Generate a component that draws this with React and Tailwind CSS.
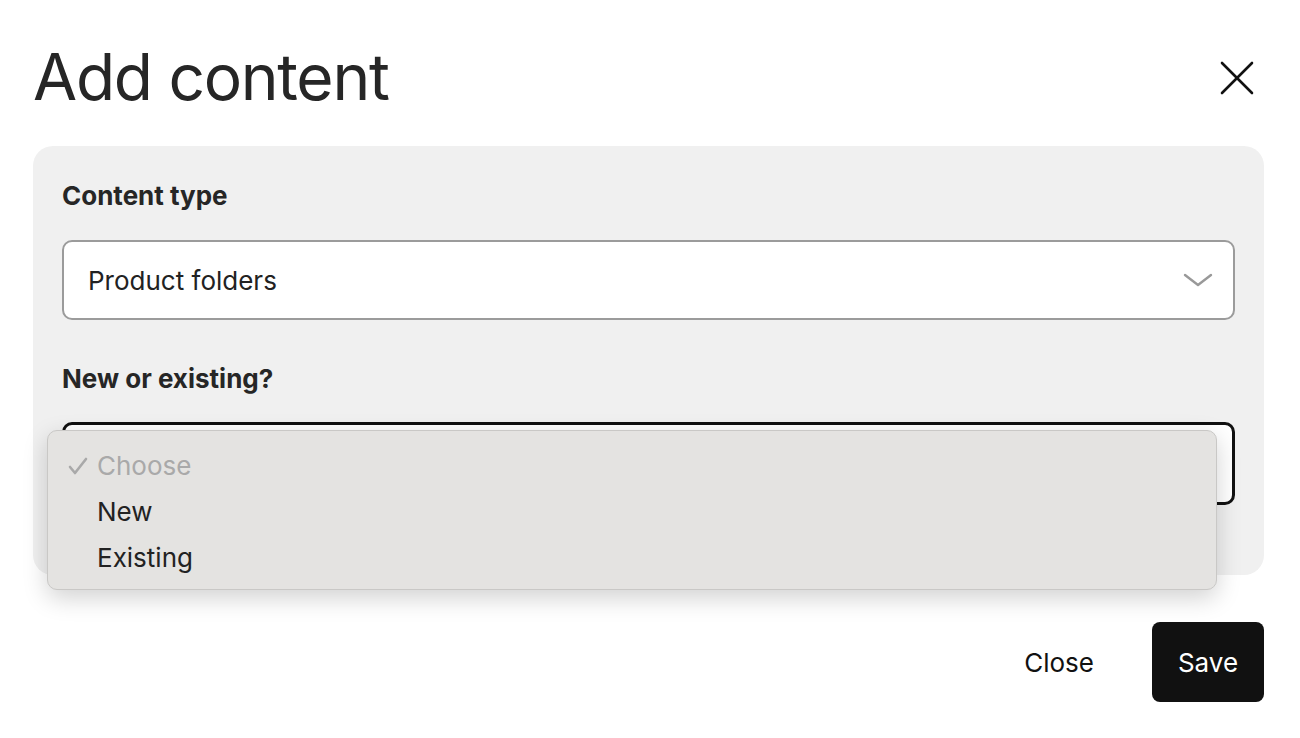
export default function App() {
  return (
    <div
      className="w-[1300px] h-[738px] bg-white pl-[33px] pr-[36px] pt-[36px] text-[#222]"
      style={{ fontFamily: "Inter, 'Liberation Sans', sans-serif" }}
    >
      {/* Header */}
      <div className="flex items-center justify-between h-[82px]">
        <h1 className="text-[64px] font-normal tracking-[-0.02em] leading-none text-[#262626]">
          Add content
        </h1>
        <button className="mr-[10px] mt-[2px] text-[#111]">
          <svg width="34" height="34" viewBox="0 0 34 34" fill="none" stroke="currentColor" strokeWidth="2.6" strokeLinecap="round">
            <line x1="2" y1="2" x2="32" y2="32" />
            <line x1="32" y1="2" x2="2" y2="32" />
          </svg>
        </button>
      </div>

      {/* Form panel */}
      <div className="mt-[28px] bg-[#f0f0f0] rounded-[20px] px-[29px] pt-[34px] pb-[70px]">
        <label className="block text-[26px] font-bold text-[#262626] leading-[32px]">
          Content type
        </label>
        <div className="mt-[28px] h-[80px] bg-white border-2 border-[#9b9b9b] rounded-[10px] flex items-center justify-between pl-[24px] pr-[20px]">
          <span className="text-[26px] text-[#222]">Product folders</span>
          <svg width="30" height="14" viewBox="0 0 30 14" fill="none" stroke="#999" strokeWidth="2.4" strokeLinecap="round" strokeLinejoin="round">
            <polyline points="2,2 15,12 28,2" />
          </svg>
        </div>

        <label className="block mt-[43px] text-[26px] font-bold text-[#262626] leading-[32px]">
          New or existing?
        </label>
        <div className="relative mt-[27px]">
          <div className="h-[83px] bg-white border-[3px] border-[#111] rounded-[10px]" />

          {/* Open dropdown */}
          <div className="absolute left-[-15px] top-[8px] w-[1170px] h-[160px] bg-[#e4e3e1] border border-[#c9c8c6] rounded-[10px] shadow-[0_8px_24px_rgba(0,0,0,0.18)] pt-[12px] pl-[20px] text-[26px] leading-[46px]">
            <div className="text-[#a9a9a9] flex items-center">
              <span className="w-[29px] flex items-center">
                <svg width="20" height="18" viewBox="0 0 20 18" fill="none" stroke="#a9a9a9" strokeWidth="2.6" strokeLinecap="round" strokeLinejoin="round">
                  <polyline points="2,10 7,16 18,2" />
                </svg>
              </span>
              <span>Choose</span>
            </div>
            <div className="pl-[29px] text-[#222]">New</div>
            <div className="pl-[29px] text-[#222]">Existing</div>
          </div>
        </div>
      </div>

      {/* Footer */}
      <div className="flex justify-end items-center gap-[58px] mt-[47px]">
        <button className="text-[26px] text-[#111]">Close</button>
        <button className="w-[112px] h-[80px] bg-[#111] text-white text-[26px] rounded-[8px]">
          Save
        </button>
      </div>
    </div>
  );
}
